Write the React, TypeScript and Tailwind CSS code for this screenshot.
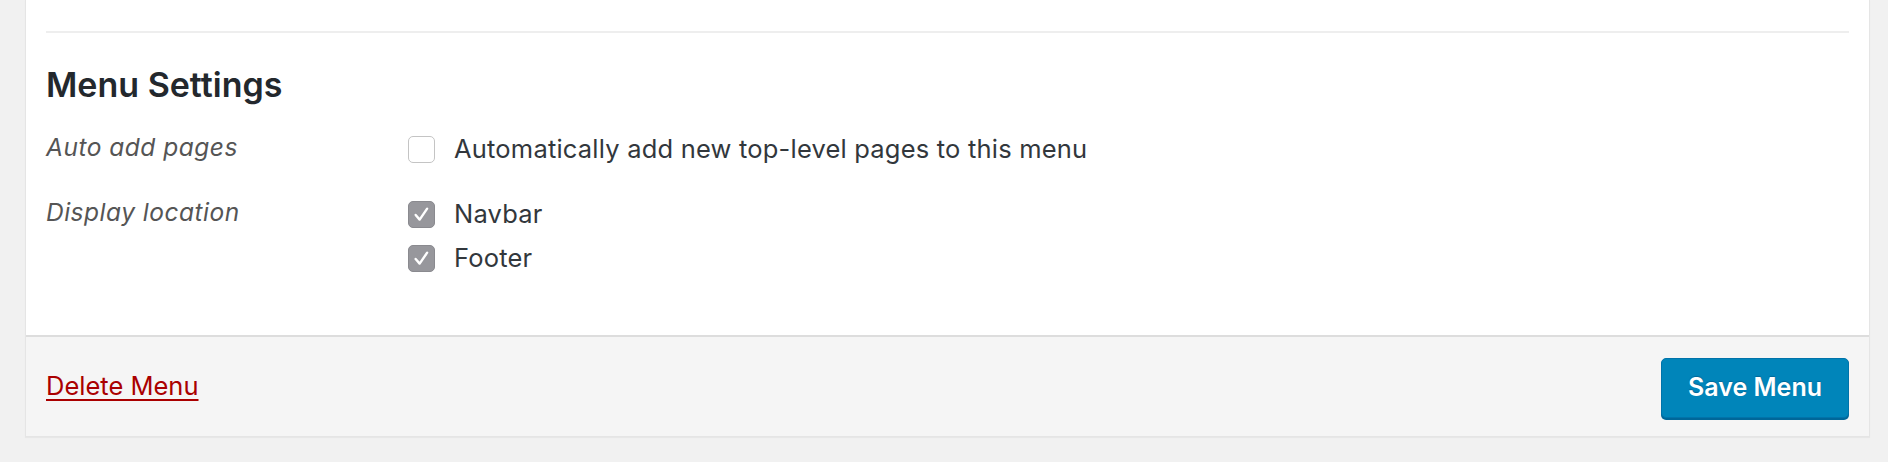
import { useState } from "react";

type Location = { id: string; label: string };

const locations: Location[] = [
    { id: "navbar", label: "Navbar" },
    { id: "footer", label: "Footer" },
];

function Box({ checked }: { checked: boolean }) {
    if (!checked) {
        return <span className="block w-[27px] h-[27px] shrink-0 rounded-[5px] border border-[#c4c4c4] bg-white" />
    }
    return (
        <span className="flex w-[27px] h-[27px] shrink-0 items-center justify-center rounded-[5px] border border-[#8a8a8f] bg-[#97979c]">
            <svg width="27" height="27" viewBox="0 0 27 27" fill="none">
                <path d="M7.2 14 L11.5 19 L19.6 7.2" stroke="white" strokeWidth="2.6" strokeLinecap="round" strokeLinejoin="round" />
            </svg>
        </span>
    )
}

function Option({ label, checked, onToggle }: { label: string, checked: boolean, onToggle: () => void }) {
    return (
        <label onClick={onToggle} className="flex flex-row items-center h-[28px] gap-[19px] cursor-pointer">
            <Box checked={checked} />
            <span className="text-[25.5px] leading-[28px] tracking-[0.2px] text-[#32373c]">{label}</span>
        </label>
    )
}

export default function App() {
    const [autoAdd, setAutoAdd] = useState(false);
    const [checked, setChecked] = useState<Record<string, boolean>>({ navbar: true, footer: true });

    return (
        <div className="min-h-screen bg-[#f1f1f1] pl-[25px] pr-[18px]" style={{ fontFamily: "Inter, 'Liberation Sans', sans-serif" }}>
            <div className="bg-white border-x border-b border-[#e5e5e5] shadow-[0_1px_1px_rgba(0,0,0,0.04)]">
                <div className="px-[20px] pt-[31px] pb-[63px]">
                    <div className="h-[2px] bg-[#eeeeee]" />
                    <h3 className="mt-[32px] text-[34px] leading-[40px] font-semibold text-[#23282d]">Menu Settings</h3>

                    <div className="mt-[30px] flex flex-row">
                        <div className="w-[362px] text-[24.5px] leading-[24px] tracking-[0.5px] italic text-[#555555]">Auto add pages</div>
                        <Option label="Automatically add new top-level pages to this menu" checked={autoAdd} onToggle={() => setAutoAdd(!autoAdd)} />
                    </div>

                    <div className="mt-[37px] flex flex-row">
                        <div className="w-[362px] text-[24.5px] leading-[24px] tracking-[0.5px] italic text-[#555555]">Display location</div>
                        <div className="flex flex-col gap-[16px]">
                            {locations.map((loc) => (
                                <Option key={loc.id} label={loc.label} checked={checked[loc.id]}
                                    onToggle={() => setChecked({ ...checked, [loc.id]: !checked[loc.id] })} />
                            ))}
                        </div>
                    </div>
                </div>

                <div className="flex flex-row items-center justify-between border-t-2 border-[#dddddd] bg-[#f5f5f5] px-[20px] pt-[21px] pb-[18px]">
                    <a href="#" className="mb-[5px] text-[25.5px] leading-[28px] text-[#aa0000] underline decoration-2 underline-offset-[4px]">Delete Menu</a>
                    <button className="h-[60px] px-[26px] rounded-[5px] border border-[#0073aa] bg-[#0085ba] shadow-[0_2px_0_#006799] text-[25px] font-semibold text-white [text-shadow:0_-1px_1px_#006799]">
                        Save Menu
                    </button>
                </div>
            </div>
        </div>
    )
}
